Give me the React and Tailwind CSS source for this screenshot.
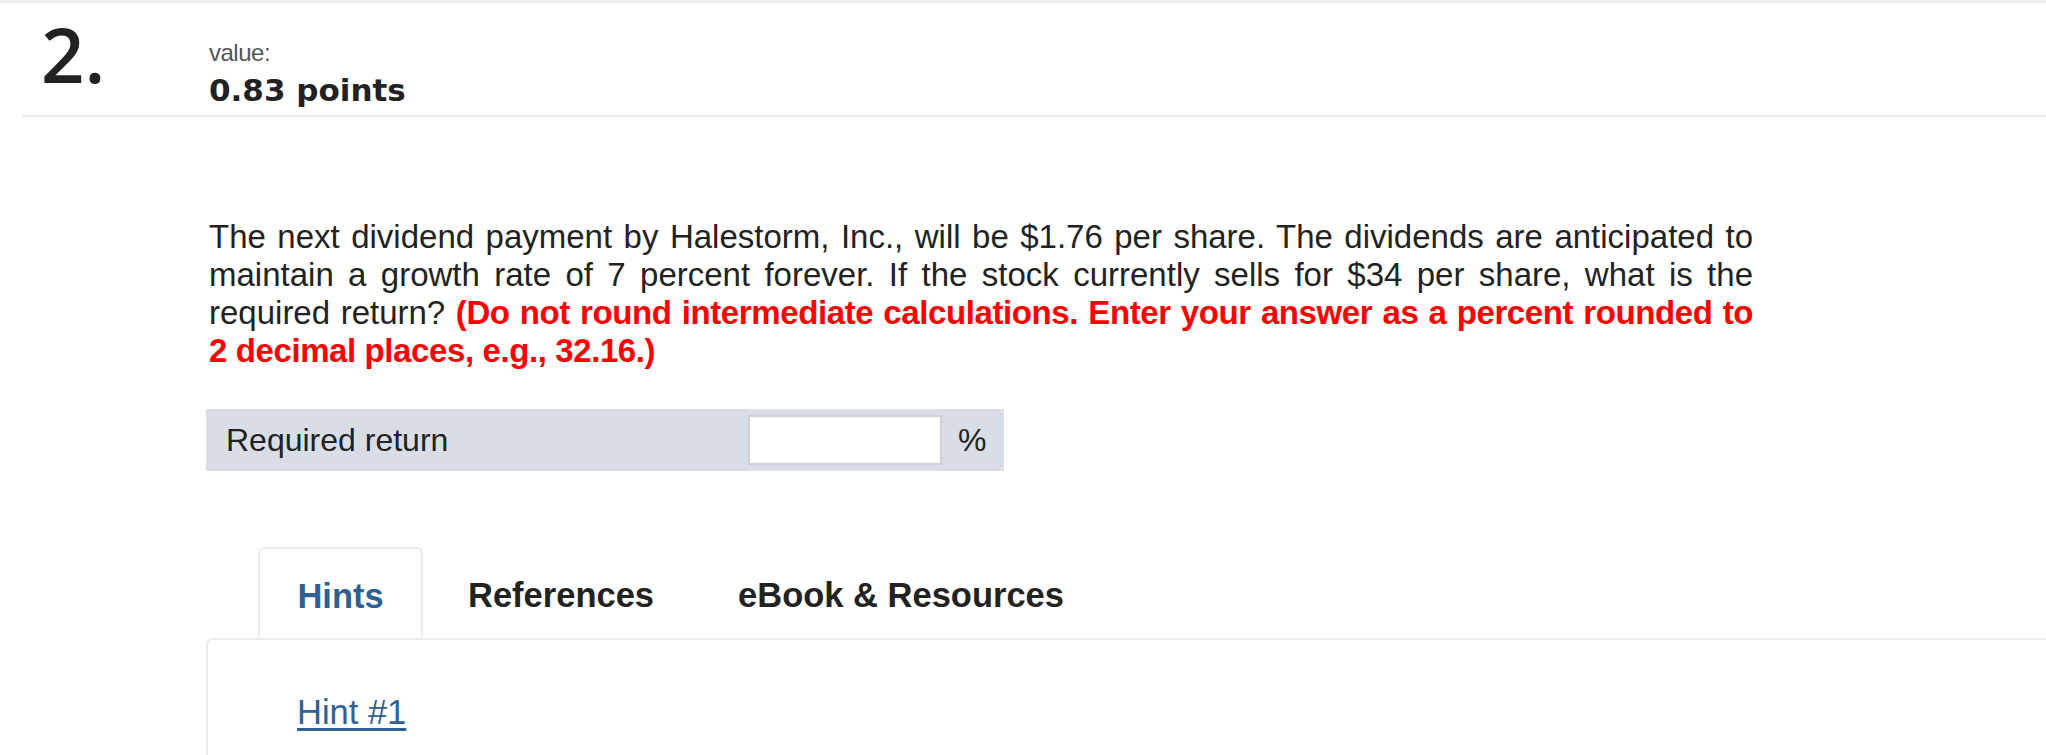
import React from "react";

// question block: number, points value, prompt, answer row and hint tabs
export default function App() {
  return (
    <div className="w-[2046px] h-[755px] overflow-hidden bg-white font-['Liberation_Sans',Arial,sans-serif] text-[#222]">
      <div className="h-[3px] bg-[#ededed]" />

      {/* header */}
      <div className="ml-[22px] flex h-[114px] items-start border-b-2 border-[#ececec]">
        <div className="w-[187px] pl-[19px] pt-[13px] font-['Open_Sans',sans-serif] text-[76px] font-semibold leading-none text-[#222]">
          2.
        </div>
        <div className="pt-[37px]">
          <div className="text-[24px] leading-[26px] tracking-[-0.5px] text-[#555]">value:</div>
          <div className="mt-[6px] font-['DejaVu_Sans',sans-serif] text-[31px] font-bold leading-[36px] text-[#222]">
            0.83 points
          </div>
        </div>
      </div>

      {/* prompt */}
      <div className="pl-[209px] pr-[293px]">
        <p className="mt-[101px] text-justify text-[33px] leading-[38px] text-[#222]">
          The next dividend payment by Halestorm, Inc., will be $1.76 per share. The dividends are
          anticipated to maintain a growth rate of 7 percent forever. If the stock currently sells
          for $34 per share, what is the required return?{" "}
          <strong className="font-bold tracking-[-0.4px] text-[#ff0000]">
            (Do not round intermediate calculations. Enter your answer as a percent rounded to 2
            decimal places, e.g., 32.16.)
          </strong>
        </p>

        {/* answer row */}
        <div className="mt-[39px] -ml-[3px] flex h-[62px] w-[798px] items-center bg-[#d8dde6]">
          <span className="w-[542px] pl-[20px] text-[32px] text-[#222]">Required return</span>
          <div className="h-[50px] w-[194px] border-2 border-[#d0d0d0] bg-white" />
          <span className="pl-[16px] text-[32px] text-[#222]">%</span>
        </div>
      </div>

      {/* tabs */}
      <div className="mt-[76px] pl-[206px]">
        <div className="flex items-end pl-[52px]">
          <div className="flex h-[91px] w-[165px] items-center justify-center rounded-t-[6px] border-2 border-b-0 border-[#ececec] bg-white pt-[6px] text-[34.5px] font-bold text-[#2f5f93]">
            Hints
          </div>
          <div className="flex h-[91px] items-center pl-[45px] pr-[42px] pt-[6px] text-[34.5px] font-bold text-[#222]">
            References
          </div>
          <div className="flex h-[91px] items-center pl-[42px] pt-[6px] text-[34.5px] font-bold text-[#222]">
            eBook &amp; Resources
          </div>
        </div>
        <div className="h-[200px] rounded-tl-[6px] border-l-2 border-t-2 border-[#ececec] pl-[89px] pt-[47px]">
          <a href="#" className="text-[34.5px] text-[#2f5f93] underline underline-offset-4">
            Hint #1
          </a>
        </div>
      </div>
    </div>
  );
}
